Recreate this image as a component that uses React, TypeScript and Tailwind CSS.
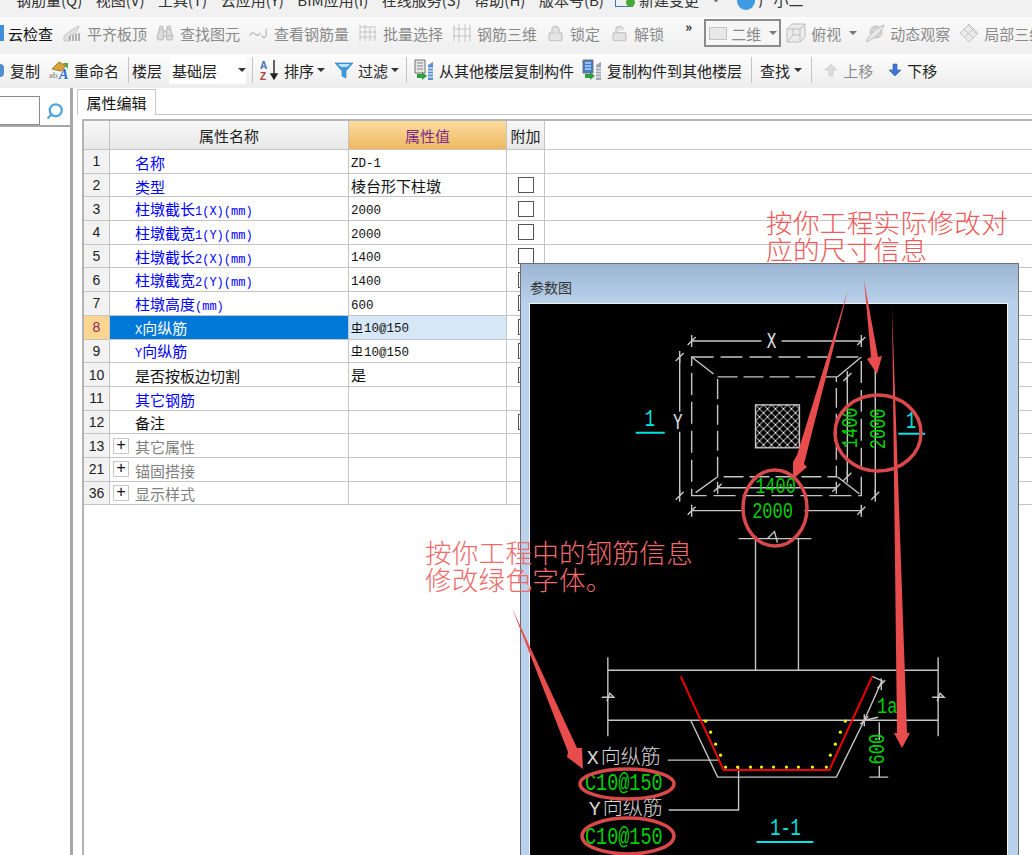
import type { ReactNode } from "react";
import { Binoculars, Lock, LockOpen, Search } from "lucide-react";

const sans = "font-['Noto_Sans_CJK_SC','Liberation_Sans',sans-serif]";

function Caret({ className = "" }: { className?: string }) {
  return <span className={`w-0 h-0 border-x-[4px] border-x-transparent border-t-[4px] border-t-[#333] ${className}`} />;
}

function Sep({ className = "" }: { className?: string }) {
  return <span className={`w-px h-[26px] bg-[#c4c4c4] ${className}`} />;
}

function Tool({ icon, label, className = "", dim = false, gap = "gap-[5px]" }: { icon: ReactNode; label: string; className?: string; dim?: boolean; gap?: string }) {
  return (
    <div className={`flex items-center shrink-0 ${gap} ${className}`}>
      <span className="w-5 h-5 flex items-center justify-center">{icon}</span>
      <span className={`whitespace-nowrap ${dim ? "text-[#8a8a8a]" : "text-[#222]"}`}>{label}</span>
    </div>
  );
}

const gray = "#c4c4c4";

function AlignIcon() {
  return (
    <svg width="20" height="20" viewBox="0 0 20 20" fill="none">
      <path d="M2 13l9-7 6-3-3 7-7 3v5H2z" fill="#e2e2e2" stroke={gray} />
      <path d="M8 18v-5M11 18v-6M14 18v-7M17 18v-8" stroke="#b0b0b0" strokeWidth="2" />
    </svg>
  );
}

function RebarViewIcon() {
  return (
    <svg width="20" height="16" viewBox="0 0 20 16" fill="none" stroke={gray} strokeWidth="1.6">
      <path d="M1 11c1-4 3-4 5-2s3 2 5-1M13 10c0 3 3 3 4 1s-1-6 1-7" />
    </svg>
  );
}

function BatchIcon() {
  return (
    <svg width="20" height="20" viewBox="0 0 20 20" fill="none" stroke={gray}>
      <path d="M2 2v16M7 2v16M2 4h16M2 9h16M2 14h16M12 4v14M17 6v12" />
    </svg>
  );
}

function Rebar3dIcon() {
  return (
    <svg width="20" height="20" viewBox="0 0 20 20" fill="none" stroke={gray}>
      <path d="M2 2v16M7 1v18M13 1v18M18 2v16M1 6h18M1 13h18" />
    </svg>
  );
}

function CubeIcon() {
  return (
    <svg width="20" height="20" viewBox="0 0 20 20" fill="#ececec" stroke="#bcbcbc">
      <path d="M1 6l5-5h13v13l-5 5H1z" />
      <path d="M1 6h13v13M14 6l5-5M7 12l-6 7M7 12h7M7 6v6" />
    </svg>
  );
}

function OrbitIcon() {
  return (
    <svg width="20" height="20" viewBox="0 0 20 20" fill="#d6d6d6" stroke="#c0c0c0">
      <circle cx="11" cy="9" r="6" />
      <path d="M1 19c2-6 10-14 18-17-2 7-11 15-18 17z" fill="#e8e8e8" />
    </svg>
  );
}

function PartIcon() {
  return (
    <svg width="20" height="20" viewBox="0 0 20 20" fill="#eaeaea" stroke="#c4c4c4">
      <path d="M10 1l9 9-9 9-9-9z" />
      <path d="M5 6l9 9M9 2l9 9M15 5l-9 9" />
    </svg>
  );
}

function RenameIcon() {
  return (
    <svg width="20" height="20" viewBox="0 0 20 20">
      <path d="M3 9l7-7 7 4-5 5z" fill="#d8a53a" stroke="#a57a20" />
      <path d="M14 3h5v6z" fill="#5aa04a" />
      <text x="0" y="18" fontSize="9" fill="#777" fontFamily="Liberation Serif">ab</text>
      <text x="10" y="19" fontSize="14" fontStyle="italic" fontWeight="700" fill="#2f6fc4" fontFamily="Liberation Serif">A</text>
    </svg>
  );
}

function SortIcon() {
  return (
    <svg width="20" height="22" viewBox="0 0 20 22">
      <text x="1" y="10" fontSize="10" fontWeight="700" fill="#3f6fb5" fontFamily="Liberation Sans">A</text>
      <text x="1" y="21" fontSize="10" fontWeight="700" fill="#b0403c" fontFamily="Liberation Sans">Z</text>
      <path d="M15 1v17M12 15l3 5 3-5z" stroke="#222" strokeWidth="1.4" fill="#222" />
    </svg>
  );
}

function FilterIcon() {
  return (
    <svg width="18" height="18" viewBox="0 0 18 18">
      <path d="M0 2h18l-7 8v7l-4-2v-5z" fill="#3f9be0" stroke="#2a78bd" strokeWidth=".6" />
      <path d="M3 3h12l-3 3H6z" fill="#bfe2f8" />
    </svg>
  );
}

function CopyFloorIcon({ dark = false }: { dark?: boolean }) {
  return (
    <svg width="20" height="22" viewBox="0 0 20 22">
      <path d="M1 1h10v13H1z" fill={dark ? "#3f7fd0" : "#e6e6e6"} stroke="#707070" />
      <path d="M3 4h6M3 7h6M3 10h6" stroke={dark ? "#fff" : "#888"} />
      <path d="M3 15h5v-2l5 4-5 4v-2H3z" fill="#2ea043" />
      <path d="M14 6l5-3v18h-5z" fill={dark ? "#9aa5b0" : "#5b8fd0"} />
      <path d="M14 9h5M14 12h5M14 15h5M14 18h5" stroke="#fff" />
    </svg>
  );
}

function VArrow({ up }: { up?: boolean }) {
  return (
    <svg width="14" height="14" viewBox="0 0 14 14">
      <path
        d={up ? "M7 1l6 6H9v6H5V7H1z" : "M7 13l6-6H9V1H5v6H1z"}
        fill={up ? "#dcdcdc" : "#3f74d6"}
        stroke={up ? "#c8c8c8" : "#2f5cb0"}
        strokeWidth=".6"
      />
    </svg>
  );
}

function RebarGlyph() {
  return (
    <svg width="12" height="13" viewBox="0 0 12 13" fill="none" stroke="#111" className="inline-block mr-[1px]">
      <path d="M2 3.5h8v5H2zM6 1v11M0.5 11.5h11" />
    </svg>
  );
}

// 把中文和 ASCII 分开,ASCII 用等宽小字
function Mixed({ text, size = "text-[12px]" }: { text: string; size?: string }) {
  const parts = text.split(/([\x20-\x7e]+)/).filter(Boolean);
  return (
    <>
      {parts.map((p, i) =>
        /^[\x20-\x7e]/.test(p) ? (
          <span key={i} className={`font-['Liberation_Mono',monospace] ${size}`}>
            {p}
          </span>
        ) : (
          <span key={i}>{p}</span>
        ),
      )}
    </>
  );
}

type Row = {
  no: number;
  name: string;
  value?: string;
  color: string;
  check?: boolean;
  rebar?: boolean;
  group?: boolean;
  selected?: boolean;
};

const rows: Row[] = [
  { no: 1, name: "名称", value: "ZD-1", color: "text-[#0000ff]" },
  { no: 2, name: "类型", value: "棱台形下柱墩", color: "text-[#0000ff]", check: true },
  { no: 3, name: "柱墩截长1(X)(mm)", value: "2000", color: "text-[#0000ff]", check: true },
  { no: 4, name: "柱墩截宽1(Y)(mm)", value: "2000", color: "text-[#0000ff]", check: true },
  { no: 5, name: "柱墩截长2(X)(mm)", value: "1400", color: "text-[#0000ff]", check: true },
  { no: 6, name: "柱墩截宽2(Y)(mm)", value: "1400", color: "text-[#0000ff]", check: true },
  { no: 7, name: "柱墩高度(mm)", value: "600", color: "text-[#0000ff]", check: true },
  { no: 8, name: "X向纵筋", value: "10@150", color: "text-white", check: true, rebar: true, selected: true },
  { no: 9, name: "Y向纵筋", value: "10@150", color: "text-[#0000ff]", check: true, rebar: true },
  { no: 10, name: "是否按板边切割", value: "是", color: "text-[#111]", check: true },
  { no: 11, name: "其它钢筋", color: "text-[#0000ff]" },
  { no: 12, name: "备注", color: "text-[#111]", check: true },
  { no: 13, name: "其它属性", color: "text-[#808080]", group: true },
  { no: 21, name: "锚固搭接", color: "text-[#808080]", group: true },
  { no: 36, name: "显示样式", color: "text-[#808080]", group: true },
];

function PropRow({ row }: { row: Row }) {
  return (
    <div className="flex h-[23.7px] border-b border-[#c4c4c4] text-[15px] leading-none">
      <div className={`w-[26px] shrink-0 flex items-center justify-center border-r border-[#c4c4c4] font-['Liberation_Sans',sans-serif] text-[14px] ${row.selected ? "bg-[#fbd691] text-[#8a2a5a]" : "bg-[#f2f2f2] text-[#222]"}`}>
        {row.no}
      </div>
      <div className={`w-[239px] shrink-0 flex items-center border-r border-[#c4c4c4] ${row.selected ? "bg-[#0078d7]" : "bg-white"} ${row.group ? "pl-[3px]" : "pl-[25px]"} ${row.color}`}>
        {row.group && (
          <span className="w-[16px] h-[16px] mr-[6px] border border-[#c8c8c8] flex items-center justify-center text-[#111] font-['Liberation_Mono',monospace] text-[16px]">+</span>
        )}
        <span className="pt-[2px]"><Mixed text={row.name} /></span>
      </div>
      <div className={`w-[158px] shrink-0 flex items-center pl-[2px] border-r border-[#c4c4c4] text-[#111] ${row.selected ? "bg-[#d6e8f8]" : "bg-white"}`}>
        {row.rebar && <RebarGlyph />}
        {row.value && <span><Mixed text={row.value} size="text-[12.5px]" /></span>}
      </div>
      <div className="w-[38px] shrink-0 flex items-center justify-center bg-white border-r border-[#c4c4c4]">
        {row.check && <span className="w-[16px] h-[16px] border border-[#555] bg-white" />}
      </div>
    </div>
  );
}

function Drawing() {
  const line = "#c6c6c6";
  const green = "#00d000";
  const cyan = "#00e5e5";
  const mono = "Liberation Mono";
  const cjk = "Noto Sans CJK SC";
  const ticks: [number, number][] = [
    [692, 340], [862, 340], [692, 510], [862, 510], [718, 487], [837, 487],
    [680, 356], [680, 495], [848, 376], [848, 476], [876, 495], [882, 684], [865, 720],
  ];
  const dots: [number, number][] = [
    [726, 767], [738, 767], [751, 767], [762, 767], [774, 767], [787, 767], [799, 767], [813, 767], [827, 767],
    [706, 721], [711, 732], [716, 744], [721, 755], [846, 721], [841, 732], [836, 744], [831, 755],
  ];
  return (
    <svg viewBox="530 303 478 552" className="w-full h-full block" fill="none">
      <defs>
        <pattern id="hatch" width="8" height="8" patternUnits="userSpaceOnUse" patternTransform="translate(756 404)">
          <path d="M0 0l8 8M8 0l-8 8" stroke="#e8e8e8" strokeWidth="1" />
        </pattern>
      </defs>
      <g stroke={line} strokeWidth="1.4">
        <path d="M692 340h70M782 340h80M680 356v55M680 431v64M848 376v100M876 356v139M718 487h119M692 510h50M805 510h57" />
        <rect x="692" y="356" width="170" height="139" strokeDasharray="22 7" />
        <rect x="718" y="376" width="119" height="100" strokeDasharray="20 6" />
        <path d="M692 356l22 17M862 356l-24 20M718 476l-22 16M838 476l22 17" />
        <rect x="756" y="404" width="44" height="43" fill="url(#hatch)" />
        <path d="M739 538h73M756 538v132M799 538v132M608 657v79M939 657v79M608 670h331M608 720h331" />
        <path d="M602 697h12l-4-4-3 8M933 697h12l-4-4-3 8M768 538l7-7 3 11" />
        <path d="M691 720l27 57h119l28-57 17-38" />
        <path d="M668 760h52M669 810h70v-44M873 676l11 5M865 720l14-3M880 722v18M880 766v11M870 777h19" />
        {ticks.map(([x, y]) => (
          <path key={`${x}-${y}`} d={`M${x - 4} ${y + 4}l8-8M${x} ${y - 6}v12`} />
        ))}
      </g>
      <path d="M681 676l43 94h106l43-94" stroke="#f00000" strokeWidth="2" />
      {dots.map(([x, y]) => (
        <circle key={`${x}-${y}`} cx={x} cy={y} r="1.6" fill="#f4f400" />
      ))}
      <g fill={cyan} fontFamily={mono} fontSize="17" textAnchor="middle">
        <text transform="translate(650 425) scale(1 1.4)">1</text>
        <text transform="translate(912 427) scale(1 1.4)">1</text>
        <text transform="translate(786 835) scale(1 1.4)">1-1</text>
      </g>
      <path d="M636 432h29M899 433h27M757 842h57" stroke={cyan} strokeWidth="2" />
      <g fill="#e0e0e0" fontFamily={mono} fontSize="16" textAnchor="middle">
        <text transform="translate(772 347) scale(1 1.35)">X</text>
        <text transform="translate(678 428) scale(1 1.35)">Y</text>
      </g>
      <g fill={green} fontFamily={mono} fontSize="17" textAnchor="middle">
        <text transform="translate(776 492) scale(1 1.3)">1400</text>
        <text transform="translate(773 517) scale(1 1.3)">2000</text>
        <text transform="translate(858 427) rotate(-90) scale(1 1.3)">1400</text>
        <text transform="translate(886 428) rotate(-90) scale(1 1.3)">2000</text>
        <text transform="translate(885 749) rotate(-90) scale(1 1.3)">600</text>
        <text transform="translate(888 713) scale(1 1.3)">1a</text>
      </g>
      <g fontFamily={mono} fontSize="18.5" fill={green} textAnchor="middle">
        <text transform="translate(624 790) scale(1 1.3)">C10@150</text>
        <text transform="translate(624 844) scale(1 1.3)">C10@150</text>
      </g>
      <g fontFamily={`${mono}, ${cjk}`} fontSize="20" fill="#d8d8d8" fontWeight="300">
        <text x="587" y="764">X<tspan fontFamily={cjk} dx="2">向纵筋</tspan></text>
        <text x="589" y="815">Y<tspan fontFamily={cjk} dx="2">向纵筋</tspan></text>
      </g>
    </svg>
  );
}

function Annotations() {
  const red = "#e84c4c";
  return (
    <svg viewBox="0 0 1032 855" className="absolute left-0 top-0 w-[1032px] h-[855px] pointer-events-none" fill="none">
      <g fill={red}>
        <path d="M848 290L804 464 807 467 793 479 793 462 797 455z" />
        <path d="M864 280L878 357 882 356 877 374 867 359 871 357z" />
        <path d="M892 308L907 733 910 733 902 748 894 733 897 733z" />
        <path d="M512 608L577 748 582 748 583 769 567 757 568 752z" />
      </g>
      <g stroke="#d9484a" strokeWidth="3.5">
        <ellipse cx="878" cy="433" rx="43" ry="38" />
        <ellipse cx="775" cy="508" rx="32" ry="38" />
        <ellipse cx="627" cy="784" rx="47" ry="15" />
        <ellipse cx="628" cy="836" rx="46" ry="18" />
      </g>
    </svg>
  );
}

export default function App() {
  return (
    <div className={`relative w-[1032px] h-[855px] overflow-hidden bg-white text-[15px] leading-none text-[#222] ${sans}`}>
      {/* 菜单栏,顶部被截掉一半 */}
      <div className="h-[17px] overflow-hidden bg-[#f1f1f1] flex items-start pl-[16px] gap-[13.5px] text-[#333] whitespace-nowrap">
        <span className="-mt-[8px]">钢筋量(Q)</span>
        <span className="-mt-[8px]">视图(V)</span>
        <span className="-mt-[8px]">工具(T)</span>
        <span className="-mt-[8px]">云应用(Y)</span>
        <span className="-mt-[8px]">BIM应用(I)</span>
        <span className="-mt-[8px]">在线服务(S)</span>
        <span className="-mt-[8px]">帮助(H)</span>
        <span className="-mt-[8px]">版本号(B)</span>
        <span className="w-[18px] h-[8px] border border-t-0 border-[#3f74c0] relative -mt-[1px] ml-[-2px] mr-[-8px]">
          <span className="absolute right-[-3px] top-[-1px] w-[9px] h-[9px] rounded-full bg-[#49a83a]" />
        </span>
        <span className="-mt-[8px]">新建变更</span>
        <span className="-mt-[8px] ml-[-4px] text-[#777]">·</span>
        <span className="w-[18px] h-[10px] rounded-b-full bg-[#3f9be0] mr-[-12px]" />
        <span className="-mt-[8px] ml-[2px]">广小二</span>
      </div>

      {/* 工具栏一 */}
      <div className="h-[37px] flex items-center pb-[5px] bg-gradient-to-b from-[#fbfbfb] to-[#eeeeee] overflow-hidden whitespace-nowrap">
        <span className="w-[4px] h-[16px] bg-[#3f8fd8] shrink-0" />
        <span className="ml-[4px] text-[#111] shrink-0">云检查</span>
        <Tool dim icon={<AlignIcon />} label="平齐板顶" className="ml-[9px]" />
        <Tool dim icon={<Binoculars size={18} color="#c4c4c4" fill="#dedede" />} label="查找图元" className="ml-[8px]" />
        <Tool dim icon={<RebarViewIcon />} label="查看钢筋量" className="ml-[9px]" />
        <Tool dim icon={<BatchIcon />} label="批量选择" className="ml-[9px]" />
        <Tool dim icon={<Rebar3dIcon />} label="钢筋三维" className="ml-[9px]" />
        <Tool dim icon={<Lock size={17} color="#c8c8c8" fill="#e4e4e4" />} label="锁定" className="ml-[8px]" />
        <Tool dim icon={<LockOpen size={17} color="#c8c8c8" fill="#e4e4e4" />} label="解锁" className="ml-[9px]" />
        <span className="ml-[21px] w-[10px] text-[13px] font-bold text-[#222] -mt-[14px] shrink-0">»</span>
        <div className="ml-[9px] w-[77px] h-[28px] shrink-0 border-2 border-[#8c8c8c] flex items-center pl-[3px] text-[#8a8a8a] bg-[#f6f6f6]">
          <span className="w-[18px] h-[13px] bg-[#e8e8e8] border border-[#c4c4c4] mr-[4px]" />
          <span>二维</span>
          <Caret className="ml-[8px] border-t-[#777]" />
        </div>
        <Tool dim icon={<CubeIcon />} label="俯视" className="ml-[5px]" />
        <Caret className="ml-[8px] border-t-[#777] shrink-0" />
        <Tool dim icon={<OrbitIcon />} label="动态观察" className="ml-[8px]" />
        <Tool dim icon={<PartIcon />} label="局部三维" className="ml-[9px]" />
      </div>

      {/* 工具栏二 */}
      <div className="h-[34px] flex items-center pb-[2px] bg-gradient-to-b from-[#fdfdfd] to-[#ededed] overflow-hidden whitespace-nowrap">
        <span className="w-[4px] h-[13px] bg-[#4f8fd0] rounded-r-sm shrink-0" />
        <span className="ml-[6px] shrink-0">复制</span>
        <Tool icon={<RenameIcon />} label="重命名" className="ml-[9px]" />
        <Sep className="ml-[9px]" />
        <span className="ml-[3px] shrink-0">楼层</span>
        <div className="ml-[7px] w-[77px] h-[28px] shrink-0 bg-white flex items-center pl-[3px]">
          <span>基础层</span>
          <Caret className="ml-[21px]" />
        </div>
        <Sep className="ml-[6px]" />
        <Tool icon={<SortIcon />} label="排序" className="ml-[6px]" />
        <Caret className="ml-[3px] shrink-0" />
        <Tool icon={<FilterIcon />} label="过滤" className="ml-[9px]" gap="gap-[4px]" />
        <Caret className="ml-[3px] shrink-0" />
        <Sep className="ml-[7px]" />
        <Tool icon={<CopyFloorIcon />} label="从其他楼层复制构件" className="ml-[7px]" />
        <Tool icon={<CopyFloorIcon dark />} label="复制构件到其他楼层" className="ml-[8px]" />
        <Sep className="ml-[9px]" />
        <span className="ml-[8px] shrink-0">查找</span>
        <Caret className="ml-[4px] shrink-0" />
        <Sep className="ml-[9px]" />
        <Tool dim icon={<VArrow up />} label="上移" className="ml-[9px]" gap="gap-[2px]" />
        <Tool icon={<VArrow />} label="下移" className="ml-[12px]" gap="gap-[2px]" />
      </div>

      {/* 主体 */}
      <div className="flex h-[767px]">
        <aside className="w-[73px] shrink-0 border-r-[3px] border-[#a8a8a8] flex flex-col">
          <div className="h-[39px] pt-[8px] flex items-start border-b-[2px] border-[#a8a8a8]">
            <div className="w-[40px] h-[29px] border border-l-0 border-[#8a8a8a] bg-white" />
            <div className="w-[30px] h-[29px] flex items-center justify-center">
              <Search size={18} strokeWidth={3} color="#4aa3e0" className="-scale-x-100" />
            </div>
          </div>
        </aside>
        <section className="flex-1 flex flex-col pl-[4px]">
          <div className="h-[27px] flex items-end border-b border-[#c8c8c8]">
            <div className="w-[79px] h-[26px] -mb-px bg-white border border-b-0 border-[#c8c8c8] flex items-center justify-center text-[#111]">属性编辑</div>
          </div>
          <div className="ml-[5px] mt-[4px] flex-1 border-t-[2px] border-l-[2px] border-[#b4b4b4]">
            {/* 表头 */}
            <div className="flex h-[29px] border-b border-[#c4c4c4] text-[15px]">
              <div className="w-[26px] shrink-0 bg-gradient-to-b from-[#f8f8f8] to-[#e8e8e8] border-r border-[#c4c4c4]" />
              <div className="w-[239px] shrink-0 bg-gradient-to-b from-[#f8f8f8] to-[#e8e8e8] border-r border-[#c4c4c4] flex items-center justify-center text-[#222]">属性名称</div>
              <div className="w-[158px] shrink-0 bg-gradient-to-b from-[#fbdc9f] to-[#efb85f] border-r border-[#c4c4c4] flex items-center justify-center text-[#7a2a8a]">属性值</div>
              <div className="w-[38px] shrink-0 bg-gradient-to-b from-[#f8f8f8] to-[#e8e8e8] border-r border-[#c4c4c4] flex items-center justify-center text-[#222]">附加</div>
            </div>
            {rows.map((row) => (
              <PropRow key={row.no} row={row} />
            ))}
          </div>
        </section>
      </div>

      {/* 参数图窗口 */}
      <div className="absolute left-[520px] top-[263px] w-[499px] h-[592px] border border-b-0 border-[#6e6e6e] bg-[#b9d1ea] flex flex-col">
        <div className="h-[39px] shrink-0 bg-gradient-to-b from-[#9bb5d3] to-[#b9d1ea] flex items-center pl-[9px] pt-[7px] text-[14px] text-[#333]">参数图</div>
        <div className="flex-1 mx-[8px] mr-[10px] border border-b-0 border-[#f0f4f8] bg-black overflow-hidden">
          <Drawing />
        </div>
      </div>

      <Annotations />

      {/* 红色批注文字 */}
      <div className="absolute left-[766px] top-[208px] text-[26.6px] leading-[27px] tracking-[0.3px] font-light text-[#ee5a5a]">
        <div className="whitespace-nowrap">按你工程实际修改对</div>
        <div className="whitespace-nowrap">应的尺寸信息</div>
      </div>
      <div className="absolute left-[425px] top-[538px] text-[26.6px] leading-[27px] tracking-[0.2px] font-light text-[#f06a6a]">
        <div className="whitespace-nowrap">按你工程中的钢筋信息</div>
        <div className="whitespace-nowrap">修改绿色字体。</div>
      </div>
    </div>
  );
}
